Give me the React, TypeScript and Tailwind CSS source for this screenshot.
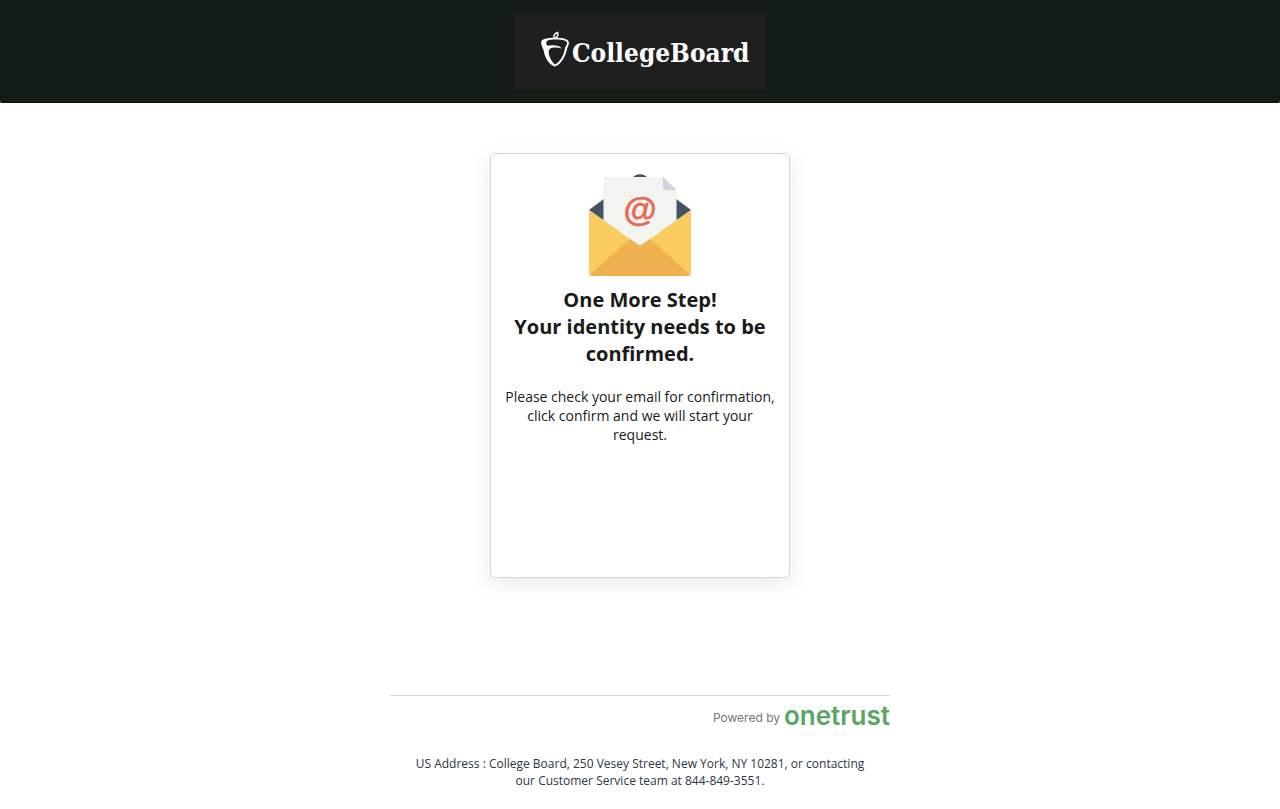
function CollegeBoardLogo() {
  return (
    <div className="flex h-[75px] w-[252px] items-start bg-[#1f1f1f] pt-4 pl-[26px] text-white">
      <svg viewBox="0 0 30 38" className="h-[38px] w-[30px] shrink-0" fill="none" aria-hidden="true">
        <path d="M14 8.600C13.200 5.500 14.800 3 17.600 2.400C18.400 4.600 17.500 6.800 15 7.800" stroke="currentColor" strokeWidth="1.5" />
        <path
          fillRule="evenodd"
          fill="currentColor"
          d="M1.200 12.200C1.300 8.800 7.800 7.800 15 7.800C22.800 7.800 28.800 9 28.900 12.600C29 15.400 27.600 16.600 26.900 19.600C25.600 26.400 21 34.600 15 36.600C9.400 34.800 5.200 28.400 4 21.900C3.600 18.600 1 16.200 1.200 12.200ZM6.300 12.400C6 14.200 6.800 15.600 8.600 15.800C11 15.300 13 15.200 15 15.400C18 15.600 20.400 16.400 21.600 18.400C17.500 16.900 12.600 17.200 10.400 18.400C8 19.800 8.600 23.600 9.800 27C10.900 30 12.800 32.800 15.100 34.600C20.400 31.800 24 24.800 24.900 18.600C25.200 16.600 27.500 14.800 27.100 12.600C26.500 10.200 20 9.600 14.900 9.600C10 9.600 6.700 10.200 6.300 12.400Z"
        />
      </svg>
      <span className="ml-[2px] pt-[5px] font-['DejaVu_Serif_Condensed','DejaVu_Serif',serif] text-[26px] leading-9 font-bold">
        CollegeBoard
      </span>
    </div>
  );
}

function EnvelopeIcon() {
  return (
    <svg viewBox="0 0 102 102" className="mx-auto block size-[102px]" aria-hidden="true">
      <path d="M0 36L46 1.6Q51-1 56 1.6L102 36L51 72Z" fill="#435565" />
      <path d="M14.5 5.5Q14.5 3 17 3H74L87.500 16V56L51 80L14.500 56Z" fill="#f3f4ef" />
      <path d="M74 3L87.500 16H77Q74 16 74 13Z" fill="#cbd3dc" />
      <text
        x="50.500"
        y="47"
        textAnchor="middle"
        fill="#e56b59"
        stroke="#e56b59"
        strokeWidth="0.5"
        className="font-['Liberation_Sans',sans-serif] text-[34px] font-bold italic"
      >
        @
      </text>
      <path d="M0 36L48 70Q51 72 54 70L102 36V98Q102 102 98 102H4Q0 102 0 98Z" fill="#facb5e" />
      <path d="M41 65L48 70Q51 72 54 70L61 65L101 100.500Q100 102 98 102H4Q2 102 1 100.500Z" fill="#efb14f" />
    </svg>
  );
}

export default function App() {
  return (
    <div className="min-h-screen bg-white font-['Open_Sans',sans-serif]">
      <header className="flex justify-center rounded-b-xs border-b border-[#0b100c] bg-[#131c15] pt-3.5 pb-[13px]">
        <CollegeBoardLogo />
      </header>

      <main className="px-4 pt-[50px]">
        <section className="mx-auto min-h-[425px] max-w-[300px] rounded-[5px] border border-[#d4d5d8] px-3 pt-5 text-center text-[#1a1a1a] shadow-[0_6px_20px_rgba(40,50,70,0.1)]">
          <EnvelopeIcon />
          <h1 className="mt-2.5 text-[20px] leading-[27px] font-bold">
            One More Step!
            <br />
            Your identity needs to be confirmed.
          </h1>
          <p className="mt-5 text-[14px] leading-[19px]">
            Please check your email for confirmation, click confirm and we will start your request.
          </p>
        </section>
      </main>

      <footer className="mx-auto mt-[117px] max-w-[500px]">
        <div className="flex h-[41px] items-start justify-end gap-1 border-t border-[#d8d8d8] pt-1">
          <span className="pt-0.5 font-['Inter',sans-serif] text-[12px] leading-8 text-[#757575]">Powered by</span>
          <span className="font-['Inter',sans-serif] text-[26px] leading-8 font-semibold text-[#58a564]">onetrust</span>
        </div>
        <p className="mt-[19px] px-4 text-center text-[12px] leading-[17px] text-[#2c3643]">
          US Address : College Board, 250 Vesey Street, New York, NY 10281, or contacting our Customer Service team at
          844-849-3551.
        </p>
      </footer>
    </div>
  );
}
